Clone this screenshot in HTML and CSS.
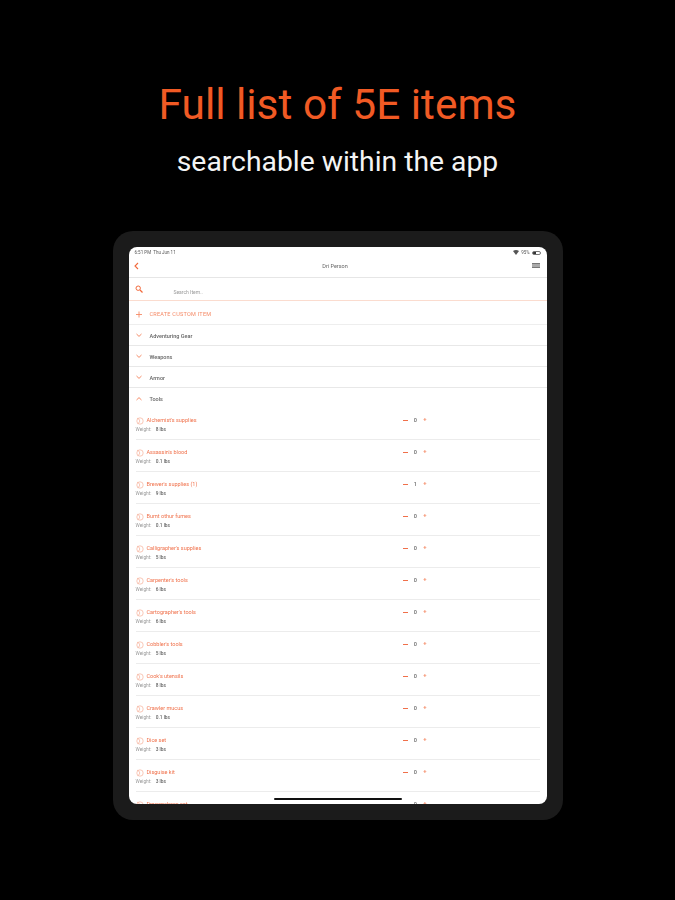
FILE: index.html
```html
<!DOCTYPE html>
<html lang="en">
<head>
  <meta charset="UTF-8" />
  <title>Full list of 5E items</title>
  <link rel="stylesheet" href="styles.css">
</head>
<body>
  <svg class="defs" width="0" height="0">
    <symbol id="flask" viewBox="0 0 8 8">
      <circle cx="4" cy="4" r="3.2" fill="none" stroke="#f5a58a" stroke-width=".6"/>
      <path d="M1.2 1.2 L3.6 2.8 L3.6 5.2 L1.6 6.6" fill="none" stroke="#f5a58a" stroke-width=".6"/>
    </symbol>
    <symbol id="chev" viewBox="0 0 8 5">
      <path d="M1.5 1 L4 3.4 L6.5 1" fill="none" stroke="#f58a66" stroke-width="1"/>
    </symbol>
  </svg>

  <h1 class="title">Full list of 5E items</h1>
  <p class="subtitle">searchable within the app</p>

  <div class="device">
    <div class="screen">
      <div class="status">
        <span>6:51 PM &nbsp;Thu Jun 11</span>
        <span class="status-right">
          <svg width="6" height="5" viewBox="0 0 6 5"><path d="M0 1 Q3 -1 6 1 L3 5 Z" fill="#555"/></svg>
          95%
          <span class="battery"></span>
        </span>
      </div>
      <header class="topbar">
        <svg class="back" width="5" height="8" viewBox="0 0 5 8"><path d="M4 1 L1 4 L4 7" fill="none" stroke="#f26a3c" stroke-width="1.1"/></svg>
        <span class="topbar-title">Dri Person</span>
        <span class="menu"></span>
      </header>
      <div class="search">
        <svg width="8" height="8" viewBox="0 0 8 8"><circle cx="3.2" cy="3.2" r="2.2" fill="none" stroke="#f26a3c" stroke-width="1"/><path d="M5 5 L7.5 7.5" stroke="#f26a3c" stroke-width="1.2"/></svg>
        <span class="search-text">Search Item..</span>
      </div>
      <div class="row row-create">
        <svg class="row-icon" width="7" height="7" viewBox="0 0 7 7"><path d="M3.5 .5 V6.5 M.5 3.5 H6.5" stroke="#f58a66" stroke-width=".9"/></svg>
        <span>CREATE CUSTOM ITEM</span>
      </div>
      <div class="row"><svg class="row-icon"><use href="#chev"/></svg><span>Adventuring Gear</span></div>
      <div class="row"><svg class="row-icon"><use href="#chev"/></svg><span>Weapons</span></div>
      <div class="row"><svg class="row-icon"><use href="#chev"/></svg><span>Armor</span></div>
      <div class="row row-open"><svg class="row-icon flip"><use href="#chev"/></svg><span>Tools</span></div>

      <ul class="items">
        <li class="item"><svg class="item-icon"><use href="#flask"/></svg><div class="item-text"><div class="item-name">Alchemist's supplies</div><div class="item-weight">Weight: <b>8 lbs</b></div></div><div class="qty"><i class="minus"></i><span>0</span><i class="plus">+</i></div></li>
        <li class="item"><svg class="item-icon"><use href="#flask"/></svg><div class="item-text"><div class="item-name">Assassin's blood</div><div class="item-weight">Weight: <b>0.1 lbs</b></div></div><div class="qty"><i class="minus"></i><span>0</span><i class="plus">+</i></div></li>
        <li class="item"><svg class="item-icon"><use href="#flask"/></svg><div class="item-text"><div class="item-name">Brewer's supplies (1)</div><div class="item-weight">Weight: <b>9 lbs</b></div></div><div class="qty"><i class="minus"></i><span>1</span><i class="plus">+</i></div></li>
        <li class="item"><svg class="item-icon"><use href="#flask"/></svg><div class="item-text"><div class="item-name">Burnt othur fumes</div><div class="item-weight">Weight: <b>0.1 lbs</b></div></div><div class="qty"><i class="minus"></i><span>0</span><i class="plus">+</i></div></li>
        <li class="item"><svg class="item-icon"><use href="#flask"/></svg><div class="item-text"><div class="item-name">Calligrapher's supplies</div><div class="item-weight">Weight: <b>5 lbs</b></div></div><div class="qty"><i class="minus"></i><span>0</span><i class="plus">+</i></div></li>
        <li class="item"><svg class="item-icon"><use href="#flask"/></svg><div class="item-text"><div class="item-name">Carpenter's tools</div><div class="item-weight">Weight: <b>6 lbs</b></div></div><div class="qty"><i class="minus"></i><span>0</span><i class="plus">+</i></div></li>
        <li class="item"><svg class="item-icon"><use href="#flask"/></svg><div class="item-text"><div class="item-name">Cartographer's tools</div><div class="item-weight">Weight: <b>6 lbs</b></div></div><div class="qty"><i class="minus"></i><span>0</span><i class="plus">+</i></div></li>
        <li class="item"><svg class="item-icon"><use href="#flask"/></svg><div class="item-text"><div class="item-name">Cobbler's tools</div><div class="item-weight">Weight: <b>5 lbs</b></div></div><div class="qty"><i class="minus"></i><span>0</span><i class="plus">+</i></div></li>
        <li class="item"><svg class="item-icon"><use href="#flask"/></svg><div class="item-text"><div class="item-name">Cook's utensils</div><div class="item-weight">Weight: <b>8 lbs</b></div></div><div class="qty"><i class="minus"></i><span>0</span><i class="plus">+</i></div></li>
        <li class="item"><svg class="item-icon"><use href="#flask"/></svg><div class="item-text"><div class="item-name">Crawler mucus</div><div class="item-weight">Weight: <b>0.1 lbs</b></div></div><div class="qty"><i class="minus"></i><span>0</span><i class="plus">+</i></div></li>
        <li class="item"><svg class="item-icon"><use href="#flask"/></svg><div class="item-text"><div class="item-name">Dice set</div><div class="item-weight">Weight: <b>3 lbs</b></div></div><div class="qty"><i class="minus"></i><span>0</span><i class="plus">+</i></div></li>
        <li class="item"><svg class="item-icon"><use href="#flask"/></svg><div class="item-text"><div class="item-name">Disguise kit</div><div class="item-weight">Weight: <b>3 lbs</b></div></div><div class="qty"><i class="minus"></i><span>0</span><i class="plus">+</i></div></li>
        <li class="item"><svg class="item-icon"><use href="#flask"/></svg><div class="item-text"><div class="item-name">Dragonchess set</div></div><div class="qty"><i class="minus"></i><span>0</span><i class="plus">+</i></div></li>
      </ul>
      <div class="home-bar"></div>
    </div>
  </div>
</body>
</html>
```

FILE: styles.css
```css
* { box-sizing: border-box; margin: 0; padding: 0; }
html, body { height: 100%; overflow: hidden; }
body {
  background: #000;
  font-family: Roboto, "Liberation Sans", sans-serif;
  display: flex;
  flex-direction: column;
  align-items: center;
  padding-top: 80px;
}
.defs { position: absolute; }

.title {
  font-size: 42.4px;
  line-height: 49px;
  font-weight: 400;
  color: #f15a24;
}
.subtitle {
  margin-top: 16px;
  font-size: 28.3px;
  line-height: 33px;
  color: #f4f4f4;
}

.device {
  width: 450px;
  height: 589px;
  margin-top: 53px;
  padding: 16px;
  background: #1b1b1b;
  border-radius: 20px;
}
.screen {
  position: relative;
  height: 100%;
  background: #fff;
  border-radius: 8px;
  overflow: hidden;
  filter: blur(.5px);
  color: #444;
  font-size: 5px;
}

.status {
  height: 11px;
  padding: 0 6px 0;
  display: flex;
  justify-content: space-between;
  align-items: center;
  font-size: 4.5px;
  color: #555;
}
.status-right { display: flex; align-items: center; gap: 2px; }
.battery { width: 9px; height: 4px; border: .5px solid #777; border-radius: 2px; background: linear-gradient(90deg, #333 50%, #fff 50%); }

.topbar {
  height: 20px;
  padding: 0 7px 3px 5px;
  display: flex;
  justify-content: space-between;
  align-items: center;
  border-bottom: 1px solid #e6e6e6;
}
.topbar-title { font-size: 5.5px; color: #666; }
.menu { width: 8px; height: 5px; margin-top: -2px; border-top: 1px solid #777; border-bottom: 1px solid #777; background: #aaa; }

.search {
  height: 23px;
  padding-left: 6px;
  display: flex;
  align-items: flex-start;
  padding-top: 7px;
  border-bottom: 1px solid #fbdccf;
}
.search-text { margin: 4px 0 0 31px; color: #999; font-size: 5px; }

.row {
  height: 21px;
  padding: 1px 0 0 6px;
  display: flex;
  align-items: center;
  gap: 7px;
  font-size: 5.5px;
  font-weight: 500;
  color: #666;
  border-bottom: 1.5px solid #e8e8e8;
}
.row-icon { width: 8px; height: 5px; flex: none; }
.flip { transform: rotate(180deg); }
.row-create {
  height: 24px;
  padding-top: 3px;
  letter-spacing: .25px;
  font-weight: 400;
  color: #f58a66;
  border-bottom: 1px solid #eee;
}
.row-create .row-icon { height: 7px; }
.row-open { height: 20px; border-bottom: 0; }

.items { list-style: none; padding: 0 7px 0; }
.item {
  height: 32px;
  display: flex;
  align-items: flex-start;
  padding-top: 9px;
  border-bottom: 1px solid #ececec;
}
.item-icon { width: 8px; height: 8px; flex: none; margin: 0 3px 0 0; }
.item-text { width: 256px; }
.item-name { font-size: 5.5px; line-height: 7px; color: #f0704a; }
.item-weight { margin: 2px 0 0 -11px; font-size: 4.8px; line-height: 7px; color: #999; }
.item-weight b { margin-left: 3px; font-weight: 500; color: #666; }

.qty {
  display: flex;
  align-items: center;
  width: 24px;
  height: 6px;
  justify-content: space-between;
  font-size: 5.5px;
  line-height: 7px;
  color: #666;
}
.qty span { font-weight: 500; }
.minus { width: 5px; height: 1px; background: #f0704a; }
.plus { margin-top: -2px; font-style: normal; font-weight: 700; font-size: 6px; line-height: 6px; color: #f58a66; }

.home-bar {
  position: absolute;
  left: 145px;
  bottom: 4px;
  width: 128px;
  height: 2px;
  border-radius: 1px;
  background: #111;
}
```
